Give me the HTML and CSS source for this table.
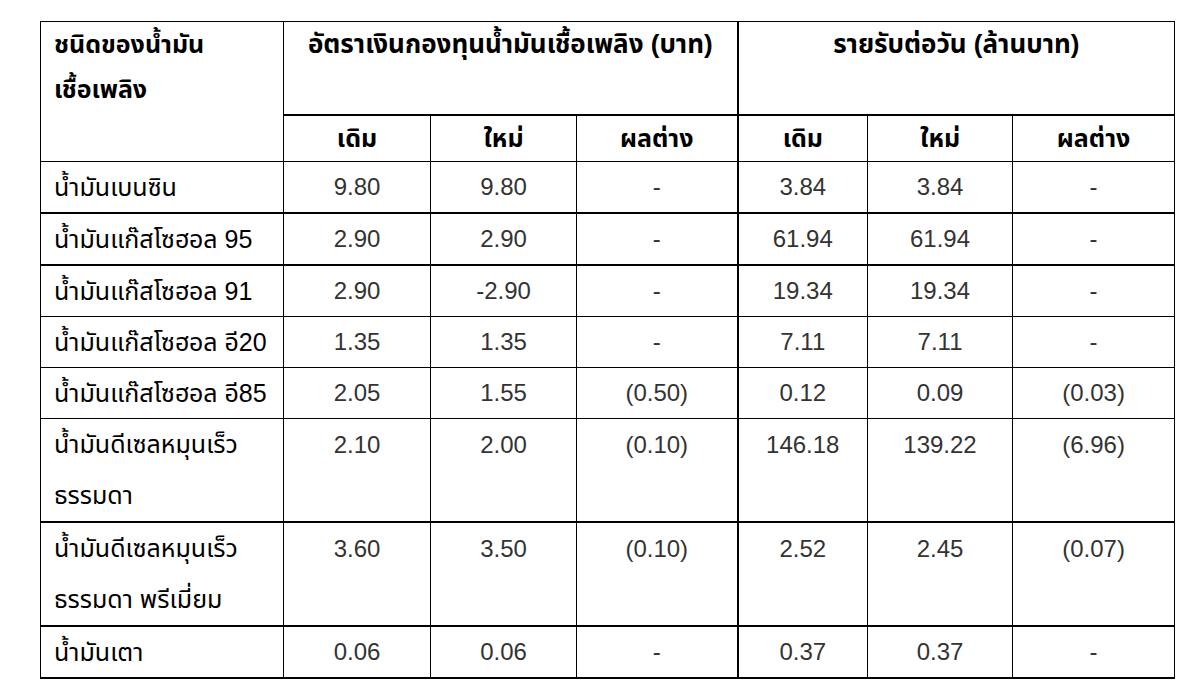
FILE: index.html
```html
<!DOCTYPE html>
<html lang="th">
<head>
<meta charset="utf-8">
<link rel="stylesheet" href="styles.css">
</head>
<body>
<div class="page">
<table class="fund">
  <colgroup>
    <col class="c1"><col class="c2"><col class="c3"><col class="c4"><col class="c5"><col class="c6"><col class="c7">
  </colgroup>
  <thead>
    <tr class="h1">
      <th rowspan="2" class="name-h">ชนิดของน้ำมัน<br>เชื้อเพลิง</th>
      <th colspan="3" class="grp">อัตราเงินกองทุนน้ำมันเชื้อเพลิง (บาท)</th>
      <th colspan="3" class="grp sep">รายรับต่อวัน (ล้านบาท)</th>
    </tr>
    <tr class="h2">
      <th>เดิม</th><th class="thick-l">ใหม่</th><th>ผลต่าง</th>
      <th class="sep">เดิม</th><th>ใหม่</th><th>ผลต่าง</th>
    </tr>
  </thead>
  <tbody>
    <tr class="r1">
      <td class="name">น้ำมันเบนซิน</td><td>9.80</td><td class="thick-l">9.80</td><td class="dash">-</td><td class="sep">3.84</td><td>3.84</td><td class="dash">-</td>
    </tr>
    <tr class="r1 thick-t">
      <td class="name">น้ำมันแก๊สโซฮอล 95</td><td>2.90</td><td class="thick-l">2.90</td><td class="dash">-</td><td class="sep">61.94</td><td>61.94</td><td class="dash">-</td>
    </tr>
    <tr class="r1 thick-t">
      <td class="name">น้ำมันแก๊สโซฮอล 91</td><td>2.90</td><td class="thick-l">-2.90</td><td class="dash">-</td><td class="sep">19.34</td><td>19.34</td><td class="dash">-</td>
    </tr>
    <tr class="r1">
      <td class="name">น้ำมันแก๊สโซฮอล อี20</td><td>1.35</td><td class="thick-l">1.35</td><td class="dash">-</td><td class="sep">7.11</td><td>7.11</td><td class="dash">-</td>
    </tr>
    <tr class="r1">
      <td class="name">น้ำมันแก๊สโซฮอล อี85</td><td>2.05</td><td class="thick-l">1.55</td><td>(0.50)</td><td class="sep">0.12</td><td>0.09</td><td>(0.03)</td>
    </tr>
    <tr class="r2">
      <td class="name">น้ำมันดีเซลหมุนเร็ว<br>ธรรมดา</td><td>2.10</td><td class="thick-l">2.00</td><td>(0.10)</td><td class="sep">146.18</td><td>139.22</td><td>(6.96)</td>
    </tr>
    <tr class="r2 thick-t">
      <td class="name">น้ำมันดีเซลหมุนเร็ว<br>ธรรมดา พรีเมี่ยม</td><td>3.60</td><td class="thick-l">3.50</td><td>(0.10)</td><td class="sep">2.52</td><td>2.45</td><td>(0.07)</td>
    </tr>
    <tr class="r1 thick-t last">
      <td class="name">น้ำมันเตา</td><td>0.06</td><td class="thick-l">0.06</td><td class="dash">-</td><td class="sep">0.37</td><td>0.37</td><td class="dash">-</td>
    </tr>
  </tbody>
</table>
</div>
</body>
</html>
```
FILE: styles.css
```css
html, body {
  margin: 0;
  padding: 0;
  background: #fff;
}
.page {
  padding: 21px 0 0 40px;
}
.fund {
  border-collapse: collapse;
  table-layout: fixed;
  width: 1134px;
  font-family: "Liberation Sans", "Noto Sans Thai", "Noto Sans", sans-serif;
  font-size: 24px;
  color: #111;
}
.c1 { width: 243px; }
.c2 { width: 147px; }
.c3 { width: 146px; }
.c4 { width: 161px; }
.c5 { width: 130px; }
.c6 { width: 145px; }
.c7 { width: 162px; }
.fund th, .fund td {
  border: 1px solid #000;
  padding: 0;
  text-align: center;
  vertical-align: top;
  white-space: nowrap;
}
.fund th {
  font-weight: bold;
  font-size: 26px;
  color: #000;
}
.fund th.name-h { font-size: 25px; }
.h1 { height: 93px; }
.h1 th { line-height: 45px; }
.h2 { height: 47px; }
.h2 th { line-height: 45px; border-top-width: 2px; font-size: 25px; }
.name-h { text-align: left !important; padding-left: 13px !important; }
.r1 { height: 51px; }
.r2 { height: 102px; }
.fund td { line-height: 50px; color: #333; }
.fund td.name { text-align: left; padding-left: 13px; color: #000; font-size: 25px; }
.r2 td { line-height: 51px; }
.thick-t td { border-top-width: 2px; }
.last td { border-bottom-width: 2px; }
.sep { border-left-width: 2px !important; }
.dash { color: #555; }
```
